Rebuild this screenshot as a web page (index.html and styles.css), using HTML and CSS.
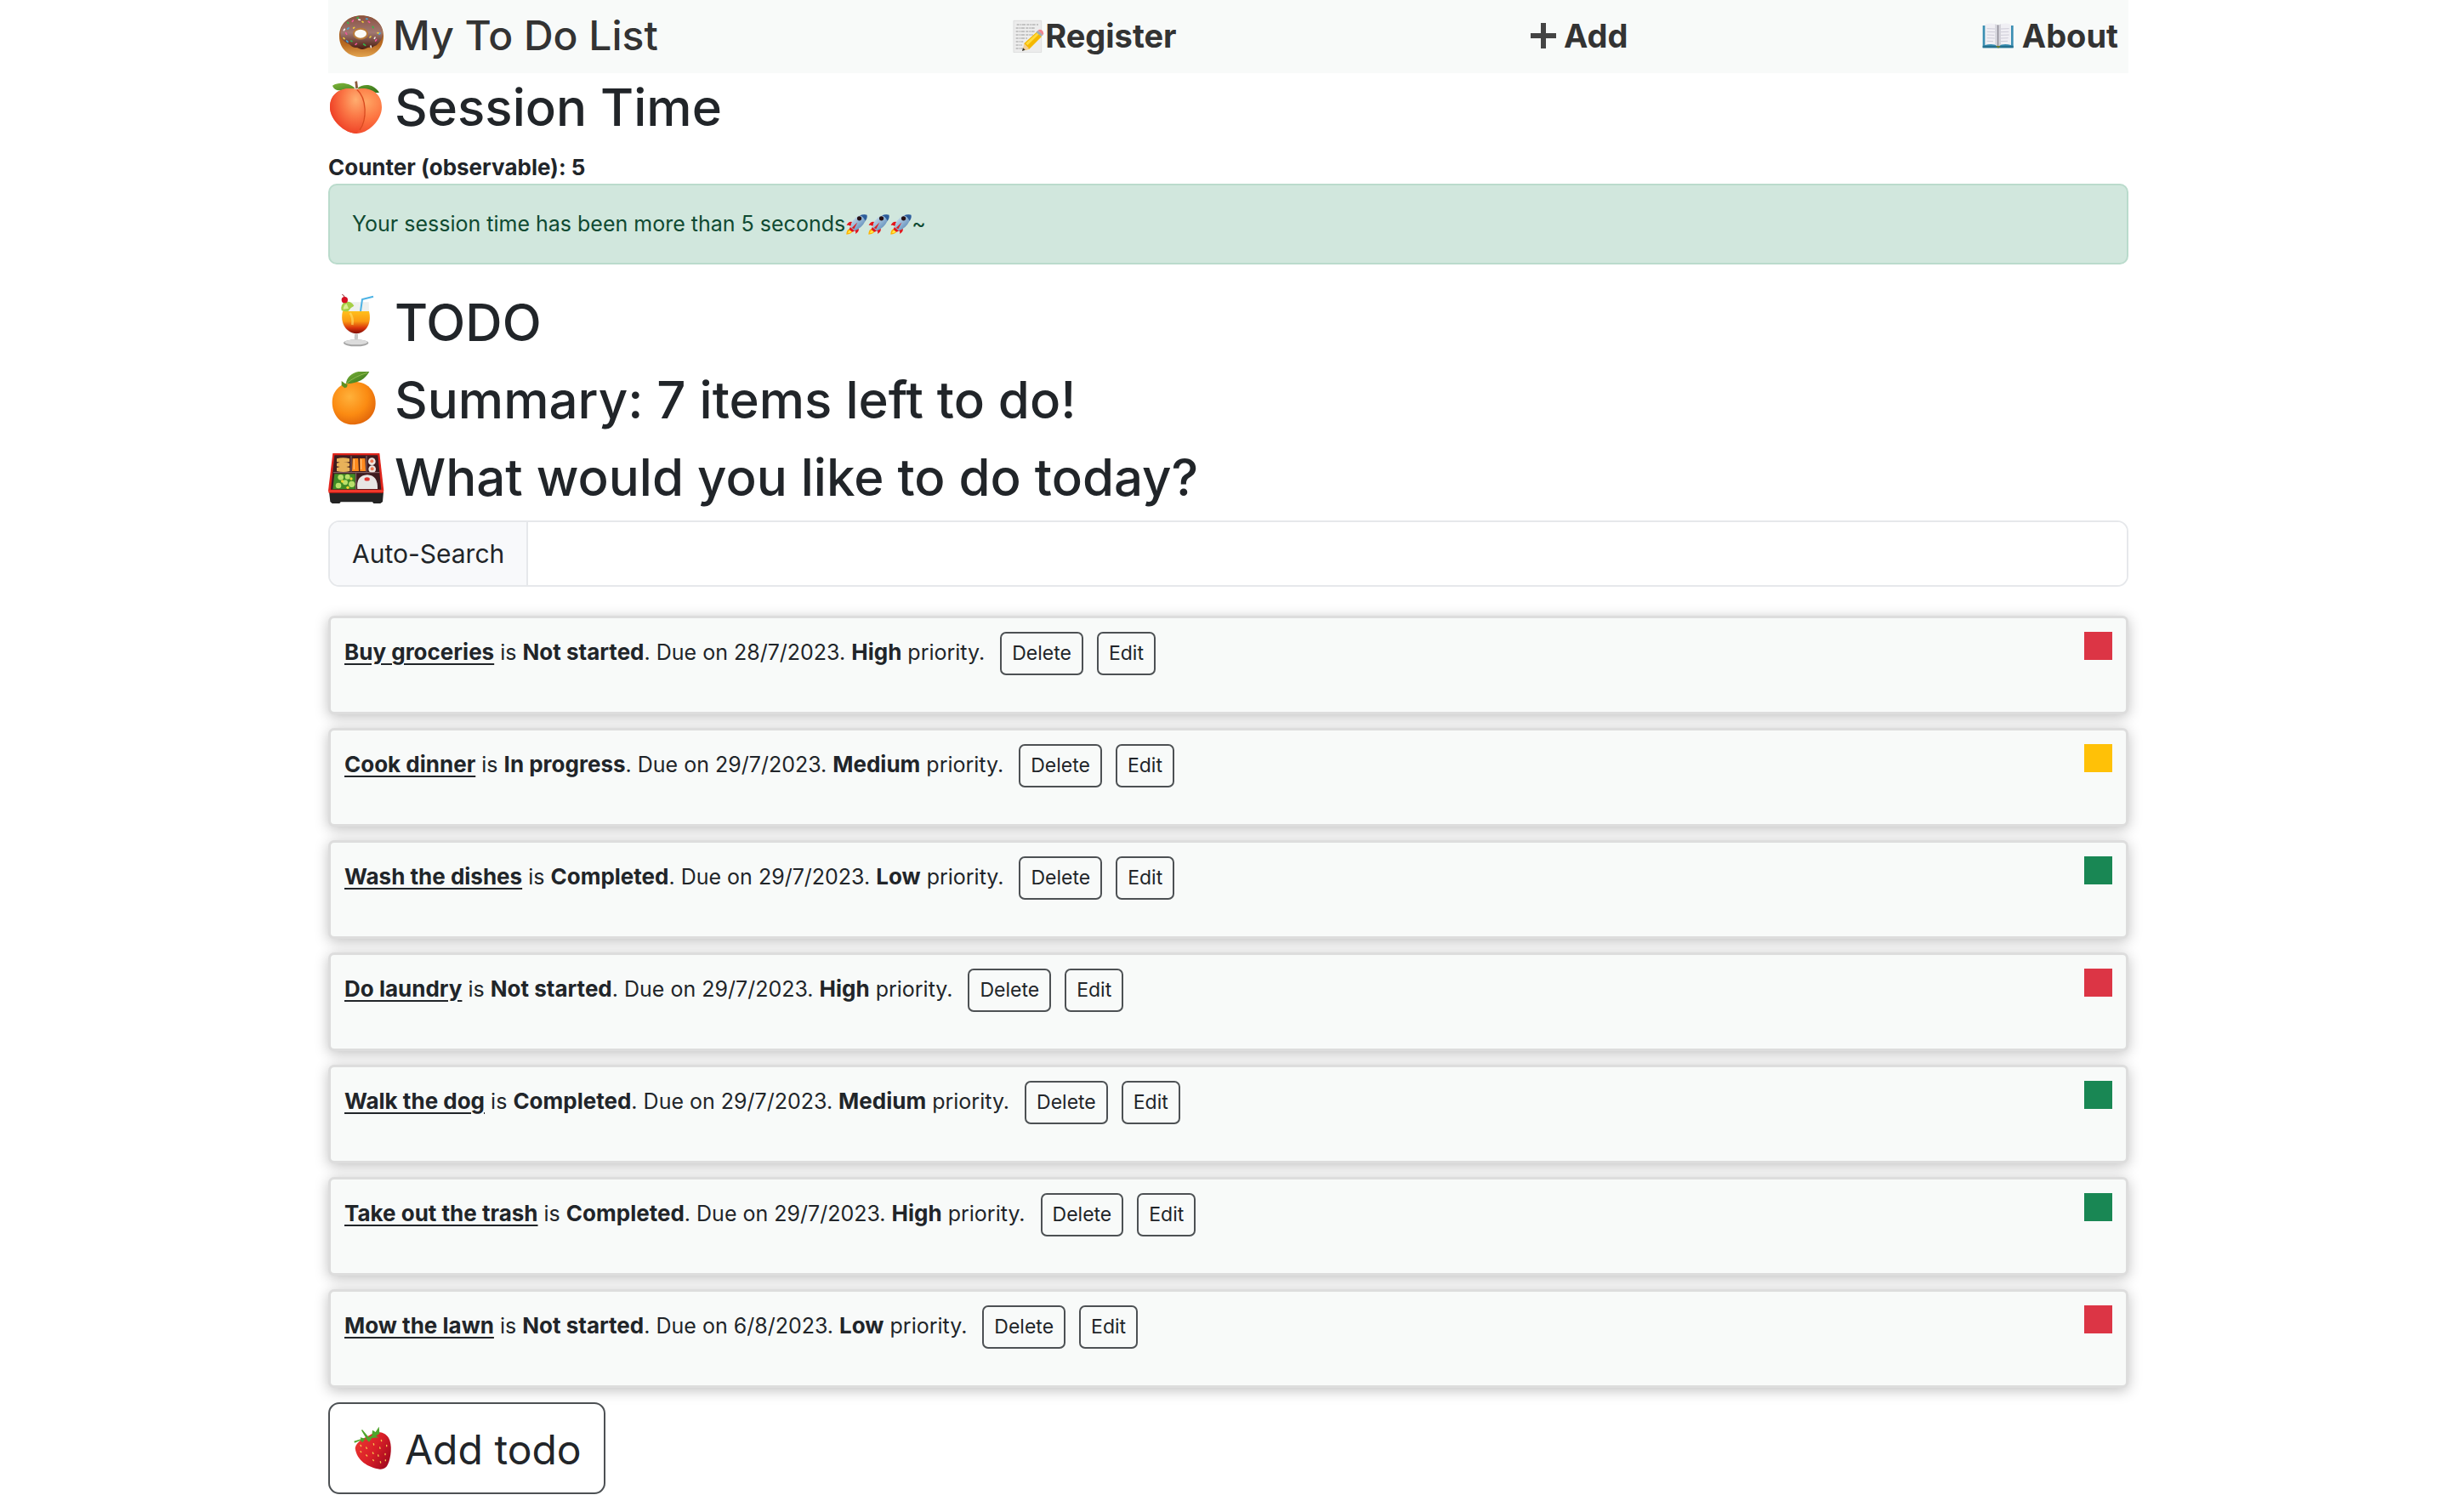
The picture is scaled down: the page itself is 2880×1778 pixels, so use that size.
FILE: index.html
```html
<!DOCTYPE html>
<html lang="en">
<head>
<meta charset="utf-8">
<title>My To Do List</title>
<link rel="stylesheet" href="styles.css">
</head>
<body>
<svg class="defs" aria-hidden="true">
  <defs>
    <radialGradient id="peach" cx=".68" cy=".3" r=".8"><stop offset="0" stop-color="#ffa765"/><stop offset=".5" stop-color="#fd7340"/><stop offset="1" stop-color="#f0432a"/></radialGradient>
    <radialGradient id="peachLeft" cx=".75" cy=".25" r=".8"><stop offset="0" stop-color="#ffae70"/><stop offset=".45" stop-color="#fb7a48"/><stop offset="1" stop-color="#ee3d24"/></radialGradient>
    <linearGradient id="leaf" x1="0" y1="0" x2="1" y2="1"><stop offset="0" stop-color="#7fb53a"/><stop offset="1" stop-color="#2f6f17"/></linearGradient>
    <linearGradient id="dough" x1="0" y1="0" x2="0" y2="1"><stop offset="0" stop-color="#8a4d1c"/><stop offset=".7" stop-color="#b96a21"/><stop offset="1" stop-color="#e3a550"/></linearGradient>
    <linearGradient id="glaze" x1="0" y1="0" x2="0" y2="1"><stop offset="0" stop-color="#8a5140"/><stop offset=".5" stop-color="#a07872"/><stop offset="1" stop-color="#4b1d10"/></linearGradient>
    <linearGradient id="juice" x1="0" y1="0" x2="0" y2="1"><stop offset="0" stop-color="#ffc01d"/><stop offset=".45" stop-color="#fb9a12"/><stop offset=".75" stop-color="#d8330c"/><stop offset="1" stop-color="#7d0d05"/></linearGradient>
    <radialGradient id="orange" cx=".4" cy=".35" r=".7"><stop offset="0" stop-color="#ffb13a"/><stop offset=".6" stop-color="#fb8b12"/><stop offset="1" stop-color="#e0640a"/></radialGradient>
    <linearGradient id="berry" x1="0" y1="0" x2="1" y2=".6"><stop offset="0" stop-color="#ee3a33"/><stop offset=".6" stop-color="#d91f28"/><stop offset="1" stop-color="#a90b1f"/></linearGradient>
    <linearGradient id="hull" x1="0" y1="0" x2="1" y2="1"><stop offset="0" stop-color="#e4eef5"/><stop offset=".5" stop-color="#8fb3d3"/><stop offset="1" stop-color="#3a6ea5"/></linearGradient>
    <symbol id="rocket" viewBox="98 32 80 80">
      <path d="M102 108q1-18 10-20l12 9q-3 9-22 11z" fill="#ffb400"/><path d="M107 103q2-9 9-10l5 5q-4 5-14 5z" fill="#ffe94a"/>
      <path d="M123 63q-12-4-20 12 10-3 14 4zM146 85q4 12-11 21 3-10-5-13z" fill="#e4141b"/>
      <path d="M117 84q2-32 34-45 13-5 25-2 3 12-5 22-14 28-41 36z" fill="url(#hull)"/>
      <path d="M151 39q13-5 25-2 3 12-5 22-5-14-20-20z" fill="#2d5d9b"/><path d="M116 81l16 15-9 3-11-9z" fill="#e4141b"/>
      <circle cx="149" cy="50" r="8" fill="#281013"/><path d="M122 84l20-20-12 24z" fill="#dc1d20"/>
    </symbol>
  </defs>
</svg>
<div class="container">
  <nav class="nav">
    <a class="brand" href="#">
      <svg class="emoji-brand" viewBox="84 41 162 162" aria-hidden="true">
        <path fill-rule="evenodd" fill="url(#dough)" d="M87 124C87 80 120 51 165 51s78 28 78 72-30 74-77 74-79-30-79-73zM142 116c0 18 43 18 43 0s-43-18-43 0z"/>
        <path fill-rule="evenodd" fill="url(#glaze)" d="M91 118C91 76 122 52 165 52s75 24 75 62c0 22-12 32-22 42-10 2-12 10-22 8-9-3-14 6-26 6-13 0-16-8-26-6-14 0-17-11-26-14-14-8-27-16-27-32zM142 116c0 18 43 18 43 0s-43-18-43 0z"/>
        <ellipse cx="162" cy="115" rx="24" ry="18" fill="#fbfbf8" stroke="#b87a3a" stroke-width="6"/>
        <g fill="none" stroke-width="5" stroke-linecap="round">
          <path stroke="#34b54c" d="M116 75l3 3M205 90l2 4M173 152l6 4M128 140l4 2M150 60l4-2"/>
          <path stroke="#f0569a" d="M133 72l3-4M190 72l4 3M110 112l3 5M148 150l-4 3M215 140l3-4"/>
          <path stroke="#f2d13a" d="M168 72l3 2M102 130l3 3M195 128l3-3M137 95l3-2M222 112l4 1"/>
          <path stroke="#4aa9d8" d="M120 95l-4 3M228 117l3-4M113 140l4 4M182 62l4 1"/>
          <path stroke="#f0eceb" d="M155 65l5 1M198 158l1 5M103 103l3-4M213 128l-2 4"/>
        </g>
      </svg>
      <span>My To Do List</span>
    </a>
    <a class="nav-link tight" href="#">
      <svg class="emoji-nav" viewBox="20 30 120 120" aria-hidden="true">
        <path d="M28 36h100v115H28z" fill="#ececec"/><path d="M29 37h98v112H29z" fill="none" stroke="#d8d8d8" stroke-width="2"/>
        <path d="M40 51h76M37 63h70M37 75h68M37 87h60M37 99h40M37 111h26M37 123h22M37 135h24" stroke="#9a9a9a" stroke-width="3" stroke-dasharray="9 3 5 2 12 4"/>
        <path d="M66 117l44-40 18 16-44 44-17 4z" fill="#f5b800"/><path d="M72 117l41-38 6 5-41 40z" fill="#ffdb3f"/>
        <path d="M108 77l7-6 18 16-7 6z" fill="#a3adb2"/><path d="M115 71q4-5 12-2 8 5 8 14l-3 5z" fill="#f08590"/><path d="M66 117l-6 26 24-7z" fill="#f3cf99"/><path d="M62 133l-3 11 11-4z" fill="#333"/>
      </svg><span>Register</span>
    </a>
    <a class="nav-link" href="#">
      <svg class="emoji-plus" viewBox="0 0 32 40" aria-hidden="true"><path d="M13 5h6v12h12v6H19v12h-6V23H1v-6h12z" fill="#444"/></svg>
      <span>Add</span>
    </a>
    <a class="nav-link" href="#">
      <svg class="emoji-nav" viewBox="243 62 120 120" aria-hidden="true">
        <path d="M248 86h108v79H248z" fill="#3b8fb3"/><path d="M248 157h108v8H248z" fill="#24708f"/>
        <path d="M256 82q26-8 46 3v73q-20-10-46-3zM302 85q22-11 46-3v73q-26-7-46 3z" fill="#f0eff4"/>
        <path d="M292 81l10 4 10-4v74l-10 3-10-3z" fill="#d3d2da"/><path d="M302 84v75" stroke="#777580" stroke-width="3"/>
        <path d="M263 97l28 1M263 108l28 1M263 119l26 1M263 130l27 1M263 141l22 1M312 98l29-1M312 109l28-1M312 120l29-1M312 131l26-1M312 142l24-1" stroke="#bcbac9" stroke-width="2"/>
        <path d="M294 158h17l-8 8z" fill="#6f7d2c"/>
      </svg>
      <span>About</span>
    </a>
  </nav>

  <main>
    <h1>
      <svg class="emoji-title" viewBox="48 278 198 198" aria-hidden="true">
        <path d="M143 311c-20-20-55-25-80-10 5 15 18 17 30 17zM150 311c20-16 55-20 78 14-22 3-45-4-78-14z" fill="url(#leaf)"/>
        <path d="M147 315c-30-12-93 0-93 62 0 48 55 93 94 93s89-45 89-93c0-62-60-74-90-62z" fill="url(#peach)"/>
        <path d="M147 315c-30-12-93 0-93 62 0 48 55 93 94 93 36-46 38-122-1-155z" fill="url(#peachLeft)"/>
        <path d="M149 315c36 32 36 105 10 143" fill="none" stroke="#d94a20" stroke-width="4"/>
        <path d="M142 287l8-2 3 24-8 4z" fill="#8b5a3c"/>
      </svg>
      <span>Session Time</span>
    </h1>
    <p class="counter">Counter (observable): 5</p>
    <div class="alert" role="alert">
      <span>Your session time has been more than 5 seconds</span>
      <svg class="emoji-text" aria-hidden="true"><use href="#rocket"/></svg>
      <svg class="emoji-text" aria-hidden="true"><use href="#rocket"/></svg>
      <svg class="emoji-text" aria-hidden="true"><use href="#rocket"/></svg>
      <span>~</span>
    </div>
    <h1>
      <svg class="emoji-title" viewBox="48 48 198 198" aria-hidden="true">
        <path d="M99 76h92l1 35c8 40-10 75-45 78-36-3-60-38-48-78z" fill="#eef0ee"/>
        <path d="M99 108h93c10 42-9 76-45 79-36-3-58-37-48-79z" fill="url(#juice)"/><path d="M125 114q12 16 8 42" fill="none" stroke="#ffe16a" stroke-width="8" opacity=".6"/>
        <path d="M95 105q-5-22 14-30 20-5 30 14-12 5-20 18-10 4-24-2z" fill="#a6cf45"/><path d="M101 101q0-14 12-19l7 16z" fill="#dcec93"/>
        <path d="M97 49q8 2 9 12" stroke="#8c1e20" stroke-width="3" fill="none"/><circle cx="106" cy="68" r="11" fill="#d50f22"/>
        <path d="M162 108l6-42 39-10" fill="none" stroke="#4cb2e4" stroke-width="6"/>
        <path d="M141 189h12v14l-3 10h-6l-4-10z" fill="#c7c7c7"/><ellipse cx="146" cy="220" rx="44" ry="12" fill="#a5a5a5"/><ellipse cx="146" cy="217" rx="40" ry="9" fill="#dcdcdc"/>
      </svg>
      <span>TODO</span>
    </h1>
    <h1>
      <svg class="emoji-title" viewBox="48 320 198 198" aria-hidden="true">
        <path d="M62 428c0-44 35-72 79-72 44 0 74 30 74 76 0 45-36 75-81 75s-72-37-72-79z" fill="url(#orange)"/>
        <path d="M95 353l13 10 8 2-2 10-8 3-11-9z" fill="#5c8f22"/><path d="M111 363c0-31 40-52 82-43-14 26-38 41-82 43z" fill="url(#leaf)"/><path d="M112 362q30-26 74-38" stroke="#a9cc62" stroke-width="2" fill="none"/>
      </svg>
      <span>Summary: 7 items left to do!</span>
    </h1>
    <h1>
      <svg class="emoji-title" viewBox="48 594 198 198" aria-hidden="true">
        <path d="M51 744h192l-3 36-8 6h-24l-4-5H92l-4 5H62l-7-6z" fill="#242424"/>
        <path d="M64 609h165l15 132-2 8H50l-2-8z" fill="#e0251c"/><path d="M70 616h153l12 121H57z" fill="#3e1c1f"/>
        <path d="M78 628q22-7 45 0v11q-22 6-45 0zM78 644q22-7 45 0v11q-22 6-45 0zM78 660q22-7 46 0v12q-22 6-46 0z" fill="#e8b25a"/>
        <path d="M134 627h20l2 45h-24zM159 627h19l2 45h-20z" fill="#ff8a1d"/><path d="M139 630v36M164 630v36" stroke="#ffc178" stroke-width="4"/>
        <g fill="#eee6df"><circle cx="202" cy="638" r="13"/><circle cx="203" cy="665" r="13"/></g><g fill="#ee7650"><circle cx="202" cy="637" r="6"/><circle cx="203" cy="664" r="6"/></g>
        <path d="M70 682h73v54H64z" fill="#3f8a25"/>
        <g fill="#b9e06a"><circle cx="92" cy="694" r="10"/><circle cx="116" cy="692" r="9"/><circle cx="84" cy="723" r="10"/><circle cx="108" cy="712" r="9"/><circle cx="131" cy="718" r="11"/></g><g fill="#f4d62f"><circle cx="98" cy="708" r="5"/><circle cx="129" cy="699" r="5"/><circle cx="117" cy="730" r="5"/></g>
        <path d="M151 735q-6-48 35-50 38 2 36 50z" fill="#e8e6e4"/><path d="M176 697q9-6 18 0v7q-9 5-18 0z" fill="#e0322d"/>
        <path d="M66 677h163M146 679v58M129 618v56M183 618v56" stroke="#8d6c70" stroke-width="3"/><path d="M49 742h194" stroke="#ff4b38" stroke-width="4"/>
      </svg>
      <span>What would you like to do today?</span>
    </h1>

    <div class="search">
      <label for="search">Auto-Search</label>
      <input id="search" type="text">
    </div>

    <ul class="todos">
      <li class="todo"><p><a href="#">Buy groceries</a> is <b>Not started</b>. Due on 28/7/2023. <b>High</b> priority.</p><button type="button">Delete</button><button type="button">Edit</button><i class="status red"></i></li>
      <li class="todo"><p><a href="#">Cook dinner</a> is <b>In progress</b>. Due on 29/7/2023. <b>Medium</b> priority.</p><button type="button">Delete</button><button type="button">Edit</button><i class="status yellow"></i></li>
      <li class="todo"><p><a href="#">Wash the dishes</a> is <b>Completed</b>. Due on 29/7/2023. <b>Low</b> priority.</p><button type="button">Delete</button><button type="button">Edit</button><i class="status green"></i></li>
      <li class="todo"><p><a href="#">Do laundry</a> is <b>Not started</b>. Due on 29/7/2023. <b>High</b> priority.</p><button type="button">Delete</button><button type="button">Edit</button><i class="status red"></i></li>
      <li class="todo"><p><a href="#">Walk the dog</a> is <b>Completed</b>. Due on 29/7/2023. <b>Medium</b> priority.</p><button type="button">Delete</button><button type="button">Edit</button><i class="status green"></i></li>
      <li class="todo"><p><a href="#">Take out the trash</a> is <b>Completed</b>. Due on 29/7/2023. <b>High</b> priority.</p><button type="button">Delete</button><button type="button">Edit</button><i class="status green"></i></li>
      <li class="todo"><p><a href="#">Mow the lawn</a> is <b>Not started</b>. Due on 6/8/2023. <b>Low</b> priority.</p><button type="button">Delete</button><button type="button">Edit</button><i class="status red"></i></li>
    </ul>

    <button class="add" type="button">
      <svg class="emoji-brand" viewBox="130 596 162 162" aria-hidden="true">
        <path d="M141 670c6-24 30-34 50-44 20-14 50-18 68 8 14 24 9 70-3 95-6 12-15 17-28 16-40-6-82-30-87-75z" fill="url(#berry)"/>
        <path d="M137 646l24-7-2-6 22 5-18-30 3-3 22 26 12-4 2-20 11 7 12-19 2 24-13 9 11 5-25 2-10 14-12-12-12 14-6-8-21 9z" fill="#4fa52c"/>
        <path d="M160 660l2 4M180 668l2 4M206 655l1 4M233 642l1 4M203 686l2 4M228 668l1 4M252 660v4M180 695l3 3M222 695l1 4M247 690v4M204 712l2 3M230 718l1 4M160 682l2 3M248 712v3" stroke="#f6c54e" stroke-width="4" stroke-linecap="round"/>
      </svg>
      <span>Add todo</span>
    </button>
  </main>
</div>
</body>
</html>
```
FILE: styles.css
```css
* { box-sizing: border-box; }

body {
  margin: 0;
  padding-left: 9px;
  background: #fff;
  color: #212529;
  font: 400 25px/39px Inter, "Liberation Sans", sans-serif;
}

h1, p, ul { margin: 0; }
svg { display: block; flex: none; }
button, input { font: inherit; color: inherit; }

.defs { position: absolute; width: 0; height: 0; }

.container {
  width: 74%;
  max-width: 2117px;
  margin: 0 auto;
  padding-bottom: 20px;
}

.nav {
  display: flex;
  justify-content: space-between;
  align-items: center;
  padding: 0 12px 2px;
  background: #f8faf9;
}

.nav a {
  display: flex;
  align-items: center;
  color: #333;
  text-decoration: none;
}

.brand {
  gap: 10px;
  font-size: 48px;
  font-weight: 500;
  line-height: 84px;
}

.nav-link {
  gap: 8px;
  font-size: 38px;
  font-weight: 700;
  line-height: 84px;
}

.nav .tight { gap: 0; }

.emoji-brand { width: 54px; height: 54px; }
.emoji-nav { width: 40px; height: 40px; }
.emoji-plus { width: 32px; height: 40px; }
.emoji-title { width: 66px; height: 66px; }
.emoji-text { width: 26px; height: 26px; }

h1 {
  display: flex;
  align-items: center;
  gap: 12px;
  margin-bottom: 13px;
  padding-top: 2px;
  font-size: 60px;
  font-weight: 500;
  line-height: 76px;
}

.counter {
  font-size: 26px;
  font-weight: 700;
}

.alert {
  display: flex;
  align-items: center;
  margin-bottom: 28px;
  padding: 26px;
  border: 2px solid #badbcc;
  border-radius: 10px;
  background: #d1e7dd;
  color: #0f4a32;
}

.search {
  display: flex;
  margin-bottom: 34px;
  border: 2px solid #e6e8eb;
  border-radius: 13px;
  overflow: hidden;
  font-size: 30px;
  line-height: 50px;
}

.search label {
  padding: 12px 26px;
  border-right: 2px solid #e6e8eb;
  background: #f8f9fb;
}

.search input {
  flex: 1;
  padding: 12px 26px;
  border: 0;
  background: #fff;
  outline: 0;
}

.todos {
  display: grid;
  gap: 16px;
  margin-bottom: 17px;
  padding: 0;
  list-style: none;
}

.todo {
  display: flex;
  align-items: baseline;
  gap: 16px;
  min-height: 116px;
  padding: 16px;
  border: 3px solid #ddd;
  border-radius: 7px;
  background: #f8faf9;
  box-shadow: 0 3px 16px rgba(0, 0, 0, .25);
}

.todo p { margin-right: 2px; }
.todo b { font-size: 26px; }

.todo a {
  color: inherit;
  font-size: 26px;
  font-weight: 700;
  text-underline-offset: 4px;
}

.todo button {
  padding: 6px 12px;
  border: 2px solid #4d5154;
  border-radius: 7px;
  background: transparent;
  font-size: 23px;
  line-height: 35px;
}

.status {
  align-self: flex-start;
  width: 33px;
  height: 33px;
  margin-left: auto;
}

.red { background: #dc3545; }
.yellow { background: #ffc107; }
.green { background: #198754; }

.add {
  display: flex;
  align-items: center;
  gap: 8px;
  padding: 15px 26px 11px;
  border: 2px solid #4d5154;
  border-radius: 13px;
  background: #fff;
  font-size: 48px;
  line-height: 78px;
}
```
